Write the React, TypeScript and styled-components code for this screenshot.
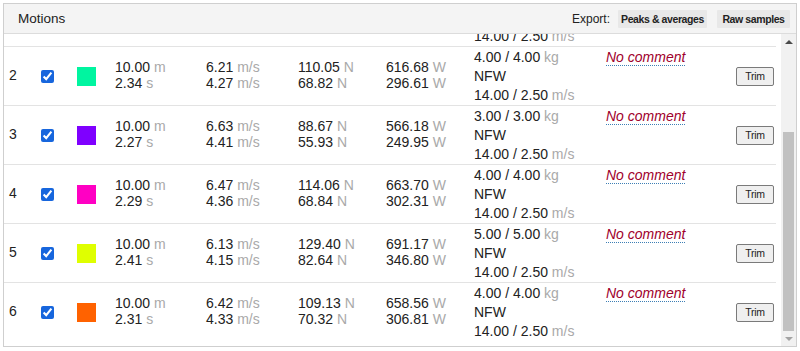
import React, { useLayoutEffect, useRef, useState } from "react";
import styled, { createGlobalStyle } from "styled-components";

const GlobalStyle = createGlobalStyle`
  html, body {
    margin: 0;
    padding: 0;
    background: #fff;
  }
  body {
    font-family: "Liberation Sans", Arial, sans-serif;
    color: #222;
  }
`;

const Page = styled.div`
  padding: 3px;
`;

const Card = styled.section`
  height: 344px;
  box-sizing: border-box;
  border: 1px solid #cfcfcf;
  display: flex;
  flex-direction: column;
`;

const Header = styled.header`
  height: 29px;
  flex: none;
  display: flex;
  align-items: center;
  justify-content: space-between;
  padding: 0 6px 0 14px;
  background: #f4f4f4;
  border-bottom: 1px solid #dcdcdc;
`;

const Title = styled.h2`
  margin: 0;
  font-size: 13.5px;
  font-weight: normal;
  color: #222;
`;

const ExportBar = styled.div`
  display: flex;
  align-items: center;
  gap: 10px;
`;

const ExportLabel = styled.span`
  font-size: 12px;
  color: #222;
  margin-right: -2px;
`;

const ExportButton = styled.button<{ $w: number }>`
  width: ${(p) => p.$w}px;
  height: 18px;
  padding: 0;
  border: none;
  border-radius: 1px;
  background: #e8e8e8;
  font-family: "Liberation Sans", Arial, sans-serif;
  font-weight: bold;
  font-size: 10.5px;
  letter-spacing: -0.4px;
  color: #222;
`;

const Body = styled.div`
  flex: 1;
  min-height: 0;
  display: flex;
`;

const Viewport = styled.div`
  flex: 1;
  overflow: hidden;
`;

const ScrollBar = styled.div`
  width: 15px;
  flex: none;
  display: flex;
  flex-direction: column;
  background: #f1f1f1;
`;

const Arrow = styled.div<{ $down?: boolean }>`
  height: 15px;
  flex: none;
  display: flex;
  align-items: center;
  justify-content: center;

  &::after {
    content: "";
    border-left: 4px solid transparent;
    border-right: 4px solid transparent;
    ${(p) =>
      p.$down
        ? "border-top: 4px solid #a3a3a3;"
        : "border-bottom: 4px solid #4a4a4a;"}
  }
`;

const Track = styled.div`
  flex: 1;
  padding: 0 2px;
`;

const Thumb = styled.div`
  background: #c1c1c1;
`;

const List = styled.div`
  padding: 84px 5px 5px 0;
`;

const Row = styled.div`
  display: grid;
  grid-template-columns: 32px 36px 38px 91px 92px 88px 88px 132px 130px 45px;
  height: 58px;
  align-items: center;
  border-bottom: 1px solid #e3e3e3;
  font-size: 14px;
  color: #222;

  &:last-child {
    border-bottom: none;
  }
`;

const Cell = styled.div<{ $top?: boolean }>`
  padding-left: 5px;
  align-self: ${(p) => (p.$top ? "start" : "center")};
  padding-top: ${(p) => (p.$top ? "1px" : "0")};
  line-height: ${(p) => (p.$top ? "19px" : "16px")};
  padding-bottom: ${(p) => (p.$top ? "0" : "3px")};
  white-space: nowrap;
`;

const Check = styled.input`
  display: block;
  width: 13px;
  height: 13px;
  margin: 3px 0 0;
  accent-color: #1766dd;
`;

const Swatch = styled.div<{ $color: string }>`
  width: 19px;
  height: 19px;
  margin-top: 3px;
  background: ${(p) => p.$color};
`;

const Unit = styled.span`
  color: #a9a9a9;
`;

const Comment = styled.span`
  font-style: italic;
  color: #a0002c;
  text-decoration: underline dotted #3d7fb5;
  text-decoration-thickness: 1px;
  text-underline-offset: 3px;
`;

const TrimButton = styled.button`
  display: block;
  width: 38px;
  height: 19px;
  margin-top: 3px;
  padding: 0;
  border: 1px solid #7a7a7a;
  border-radius: 2px;
  background: #efefef;
  font-family: "Liberation Sans", Arial, sans-serif;
  font-size: 10.5px;
  letter-spacing: -0.3px;
  color: #222;
`;

type Motion = {
  n: number;
  color: string;
  dist: string;
  time: string;
  vPeak: string;
  vAvg: string;
  fPeak: string;
  fAvg: string;
  pPeak: string;
  pAvg: string;
  load: string;
};

const motions: Motion[] = [
  { n: 1, color: "#2f8cff", dist: "10.00", time: "2.30", vPeak: "6.40", vAvg: "4.35", fPeak: "112.40", fAvg: "69.10", pPeak: "640.20", pAvg: "300.45", load: "4.00 / 4.00" },
  { n: 2, color: "#00f5a0", dist: "10.00", time: "2.34", vPeak: "6.21", vAvg: "4.27", fPeak: "110.05", fAvg: "68.82", pPeak: "616.68", pAvg: "296.61", load: "4.00 / 4.00" },
  { n: 3, color: "#7f00ff", dist: "10.00", time: "2.27", vPeak: "6.63", vAvg: "4.41", fPeak: "88.67", fAvg: "55.93", pPeak: "566.18", pAvg: "249.95", load: "3.00 / 3.00" },
  { n: 4, color: "#ff00c3", dist: "10.00", time: "2.29", vPeak: "6.47", vAvg: "4.36", fPeak: "114.06", fAvg: "68.84", pPeak: "663.70", pAvg: "302.31", load: "4.00 / 4.00" },
  { n: 5, color: "#dfff00", dist: "10.00", time: "2.41", vPeak: "6.13", vAvg: "4.15", fPeak: "129.40", fAvg: "82.64", pPeak: "691.17", pAvg: "346.80", load: "5.00 / 5.00" },
  { n: 6, color: "#ff6200", dist: "10.00", time: "2.31", vPeak: "6.42", vAvg: "4.33", fPeak: "109.13", fAvg: "70.32", pPeak: "658.56", pAvg: "306.81", load: "4.00 / 4.00" },
];

const Pair = ({ a, b, ua, ub }: { a: string; b: string; ua: string; ub: string }) => (
  <Cell>
    {a} <Unit>{ua}</Unit>
    <br />
    {b} <Unit>{ub}</Unit>
  </Cell>
);

const App = () => {
  const viewport = useRef<HTMLDivElement>(null);
  const [thumb, setThumb] = useState({ top: 0, height: 0 });

  // list opens scrolled to the latest motion
  useLayoutEffect(() => {
    const el = viewport.current;
    if (!el) return;
    el.scrollTop = el.scrollHeight;
    const track = el.clientHeight - 30;
    setThumb({
      top: (el.scrollTop / el.scrollHeight) * track,
      height: (el.clientHeight / el.scrollHeight) * track,
    });
  }, []);

  return (
    <Page>
      <GlobalStyle />
      <Card>
        <Header>
          <Title>Motions</Title>
          <ExportBar>
            <ExportLabel>Export:</ExportLabel>
            <ExportButton $w={89}>Peaks &amp; averages</ExportButton>
            <ExportButton $w={73}>Raw samples</ExportButton>
          </ExportBar>
        </Header>
        <Body>
          <Viewport ref={viewport}>
            <List>
              {motions.map((m) => (
                <Row key={m.n}>
                  <Cell>{m.n}</Cell>
                  <Cell>
                    <Check type="checkbox" defaultChecked />
                  </Cell>
                  <Cell>
                    <Swatch $color={m.color} />
                  </Cell>
                  <Pair a={m.dist} ua="m" b={m.time} ub="s" />
                  <Pair a={m.vPeak} ua="m/s" b={m.vAvg} ub="m/s" />
                  <Pair a={m.fPeak} ua="N" b={m.fAvg} ub="N" />
                  <Pair a={m.pPeak} ua="W" b={m.pAvg} ub="W" />
                  <Cell $top>
                    {m.load} <Unit>kg</Unit>
                    <br />
                    NFW
                    <br />
                    14.00 / 2.50 <Unit>m/s</Unit>
                  </Cell>
                  <Cell $top>
                    <Comment>No comment</Comment>
                  </Cell>
                  <Cell>
                    <TrimButton>Trim</TrimButton>
                  </Cell>
                </Row>
              ))}
            </List>
          </Viewport>
          <ScrollBar>
            <Arrow />
            <Track>
              <Thumb style={{ marginTop: thumb.top, height: thumb.height }} />
            </Track>
            <Arrow $down />
          </ScrollBar>
        </Body>
      </Card>
    </Page>
  );
};

export default App;
